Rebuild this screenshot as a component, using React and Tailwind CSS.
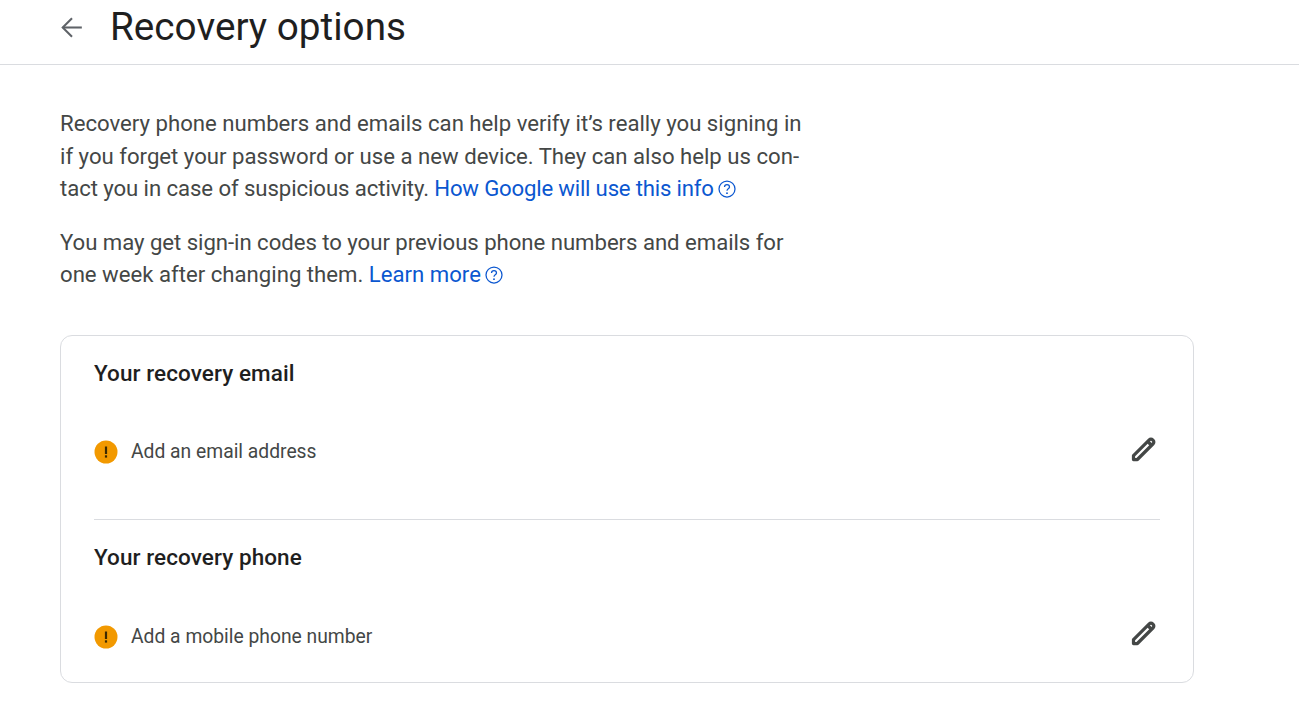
const font = "font-['Roboto','Liberation_Sans',sans-serif]";

function Help({ className }) {
  return (
    <svg viewBox="0 0 24 24" className={`inline-block w-[20px] h-[20px] align-[-3px] ${className}`} fill="none" stroke="#0b57d0" strokeWidth="1.5">
      <circle cx="12" cy="12" r="9.6" />
      <path d="M9 9.6a3 3 0 0 1 6 0c0 2.1-3 2.3-3 4.4" />
      <circle cx="12" cy="17" r="1.1" fill="#0b57d0" stroke="none" />
    </svg>
  );
}

function Warn() {
  return (
    <svg viewBox="0 0 24 24" className="w-[24px] h-[24px] shrink-0">
      <circle cx="12" cy="12" r="11.5" fill="#f29900" />
      <rect x="10.9" y="6.5" width="2.2" height="7.5" fill="#3c2a00" />
      <rect x="10.9" y="15.3" width="2.2" height="2.3" fill="#3c2a00" />
    </svg>
  );
}

function Pencil() {
  return (
    <svg viewBox="0 0 24 24" className="w-[30px] h-[30px]" fill="none" stroke="#444746" strokeWidth="2.6" strokeLinejoin="round">
      <path d="M3.6 20.4v-3.1L16.2 4.7a1.9 1.9 0 0 1 2.7 0l.4.4a1.9 1.9 0 0 1 0 2.7L6.7 20.4z" />
      <path d="M15 6l3 3" />
    </svg>
  );
}

function Row({ title, label, rowClass, pencilClass }) {
  return (
    <div>
      <h2 className="text-[22.5px] leading-[28px] font-medium tracking-[0.08px] text-[#1f1f1f]">{title}</h2>
      <div className={`flex items-center justify-between ${rowClass}`}>
        <div className="flex items-center gap-[13px]">
          <Warn />
          <span className="text-[19.3px] leading-[28px] text-[#444746]">{label}</span>
        </div>
        <div className={`pr-[1px] ${pencilClass}`}><Pencil /></div>
      </div>
    </div>
  );
}

export default function App() {
  return (
    <div className={`${font} bg-white min-h-[712px] overflow-hidden`}>
      <header className="h-[65px] border-b border-[#dadce0] flex items-center pl-[56px] gap-[23px]">
        <svg viewBox="0 0 24 24" className="w-[31px] h-[31px] -mt-[9px]" fill="none" stroke="#5f6368" strokeWidth="1.6">
          <path d="M20 12H5.2" />
          <path d="M12.4 4.8L5.2 12l7.2 7.2" />
        </svg>
        <h1 className="text-[38.7px] leading-[44px] text-[#1f1f1f] -mt-[10px]">Recovery options</h1>
      </header>
      <main className="pl-[60px] pt-[42px] w-[1194px] box-content">
        <p className="text-[22.17px] leading-[32.5px] text-[#444746]">
          Recovery phone numbers and emails can help verify it’s really you signing in<br />
          if you forget your password or use a new device. They can also help us con-<br />
          <span className="tracking-[-0.08px]">tact you in case of suspicious activity. </span><span className="text-[#0b57d0] tracking-[-0.19px]">How Google will use this info</span><Help className="ml-[3px]" />
        </p>
        <p className="text-[22.17px] leading-[32.5px] text-[#444746] mt-[21px]">
          <span className="tracking-[-0.04px]">You may get sign-in codes to your previous phone numbers and emails for</span><br />
          one week after changing them. <span className="text-[#0b57d0]">Learn more</span><Help className="ml-[3px]" />
        </p>
        <section className="mt-[44px] w-[1134px] h-[348px] border border-[#dadce0] rounded-[12px] px-[33px] pt-[23px]">
          <div className="h-[161px] border-b border-[#dadce0]">
            <Row title="Your recovery email" label="Add an email address" rowClass="mt-[51px]" pencilClass="-mt-[6px]" />
          </div>
          <div className="pt-[23px]">
            <Row title="Your recovery phone" label="Add a mobile phone number" rowClass="mt-[52px]" pencilClass="-mt-[8px]" />
          </div>
        </section>
      </main>
    </div>
  );
}
